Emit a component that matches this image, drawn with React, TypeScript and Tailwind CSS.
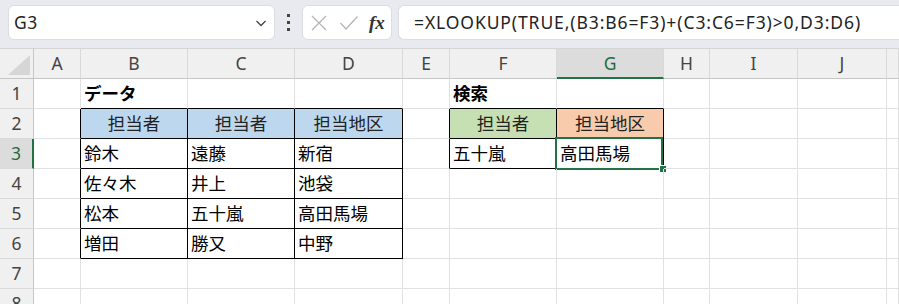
import React from 'react';

const COLS = ['A', 'B', 'C', 'D', 'E', 'F', 'G', 'H', 'I', 'J', 'K'];
const ROWS = [1, 2, 3, 4, 5, 6, 7, 8];

type Cell = { text?: string; bold?: boolean; center?: boolean; bg?: string };

const CELLS: Record<string, Cell> = {
  B1: { text: 'データ', bold: true },
  B2: { text: '担当者', center: true, bg: 'bg-[#bdd7ee]' },
  C2: { text: '担当者', center: true, bg: 'bg-[#bdd7ee]' },
  D2: { text: '担当地区', center: true, bg: 'bg-[#bdd7ee]' },
  B3: { text: '鈴木' }, C3: { text: '遠藤' }, D3: { text: '新宿' },
  B4: { text: '佐々木' }, C4: { text: '井上' }, D4: { text: '池袋' },
  B5: { text: '松本' }, C5: { text: '五十嵐' }, D5: { text: '高田馬場' },
  B6: { text: '増田' }, C6: { text: '勝又' }, D6: { text: '中野' },
  F1: { text: '検索', bold: true },
  F2: { text: '担当者', center: true, bg: 'bg-[#c6e0b4]' },
  G2: { text: '担当地区', center: true, bg: 'bg-[#f8cbad]' },
  F3: { text: '五十嵐' },
  G3: { text: '高田馬場' },
};

// cells framed by the black table borders
const inTable = (c: string, r: number) =>
  (['B', 'C', 'D'].includes(c) && r >= 2 && r <= 6) || (['F', 'G'].includes(c) && r >= 2 && r <= 3);

export default function App() {
  const borderClass = (c: string, r: number) => {
    const i = COLS.indexOf(c);
    const right = inTable(c, r) || (i + 1 < COLS.length && inTable(COLS[i + 1], r));
    const bottom = inTable(c, r) || inTable(c, r + 1);
    return `${right ? 'border-r-black' : 'border-r-[#e1e1e1]'} ${bottom ? 'border-b-black' : 'border-b-[#e1e1e1]'}`;
  };

  return (
    <div className="w-[899px] h-[304px] overflow-hidden bg-white text-black font-['Noto_Sans_CJK_JP','Noto_Sans',sans-serif]">
      {/* Formula bar */}
      <div className="h-[48px] bg-[#e8eaef] flex items-start pt-[5px] pl-[8px] overflow-hidden">
        <div className="w-[267px] h-[35px] shrink-0 bg-white rounded-[6px] border border-[#dcdde1] flex items-center justify-between pl-[5px] pr-[6px]">
          <span className="text-[17.5px] text-[#222] font-['Noto_Sans',sans-serif] tracking-[0.5px]">G3</span>
          <svg width="14" height="14" viewBox="0 0 14 14" className="text-[#444]">
            <path d="M2.5 5 L7 9.5 L11.5 5" fill="none" stroke="currentColor" strokeWidth="1.3" />
          </svg>
        </div>
        <div className="w-[27px] h-[35px] shrink-0 flex flex-col items-center justify-center gap-[4px]">
          <div className="w-[3px] h-[3px] bg-[#444]" />
          <div className="w-[3px] h-[3px] bg-[#444]" />
          <div className="w-[3px] h-[3px] bg-[#444]" />
        </div>
        <div className="w-[90px] h-[35px] shrink-0 bg-white rounded-[6px] border border-[#dcdde1] flex items-center pl-[7px] gap-[11px]">
          <svg width="18" height="18" viewBox="0 0 18 18">
            <path d="M2 2 L16 16 M16 2 L2 16" stroke="#b4b4b4" strokeWidth="1.2" fill="none" />
          </svg>
          <svg width="20" height="18" viewBox="0 0 20 18">
            <path d="M1.5 9 L7 15 L18.5 2.5" stroke="#b4b4b4" strokeWidth="1.2" fill="none" />
          </svg>
          <span className="text-[19px] italic font-bold leading-none text-[#333] font-['Liberation_Serif',serif] -ml-[1px]">fx</span>
        </div>
        <div className="ml-[6px] w-[520px] h-[35px] shrink-0 bg-white rounded-l-[6px] border border-r-0 border-[#dcdde1] flex items-center pl-[15px]">
          <span className="text-[17.5px] text-[#222] font-['Noto_Sans',sans-serif] tracking-[0.9px] whitespace-nowrap">
            =XLOOKUP(TRUE,(B3:B6=F3)+(C3:C6=F3)&gt;0,D3:D6)
          </span>
        </div>
      </div>

      {/* Sheet grid */}
      <div className="grid grid-cols-[34px_47px_107px_107px_108px_47px_107px_107px_46px_88px_89px_1fr] grid-rows-[31px_repeat(8,30px)]">
        {/* corner */}
        <div className="bg-[#f0f0f0] border-t border-t-[#d5d5d5] border-b border-b-[#c6c6c6] border-r border-r-[#c6c6c6] flex items-end justify-end pr-[3px] pb-[3px]">
          <svg width="22" height="20" viewBox="0 0 22 20">
            <path d="M22 0 L22 20 L0 20 Z" fill="#d6d6d6" />
          </svg>
        </div>
        {COLS.map(c => (
          <div
            key={c}
            className={`border-t border-t-[#d5d5d5] flex items-center justify-center text-[17.5px] font-['Noto_Sans',sans-serif] ${
              c === 'G'
                ? 'bg-[#dcdcdc] border-b-2 border-b-[#217346] border-r border-r-[#d9d9d9] text-[#1e6b3f]'
                : 'bg-[#f0f0f0] border-b border-b-[#c6c6c6] border-r border-r-[#d9d9d9] text-[#444]'
            }`}
          >
            {c === 'K' ? '' : c}
          </div>
        ))}

        {ROWS.map(r => (
          <React.Fragment key={r}>
            <div
              className={`flex items-center justify-center text-[17.5px] font-['Noto_Sans',sans-serif] border-b border-b-[#d9d9d9] ${
                r === 3
                  ? 'bg-[#dcdcdc] text-[#1e6b3f] border-r-2 border-r-[#217346]'
                  : 'bg-[#f0f0f0] text-[#444] border-r border-r-[#c6c6c6]'
              }`}
            >
              {r}
            </div>
            {COLS.map(c => {
              const key = `${c}${r}`;
              const cell = CELLS[key];
              return (
                <div
                  key={key}
                  className={`relative border-r border-b flex items-center px-[3px] text-[17.5px] whitespace-nowrap ${borderClass(c, r)} ${
                    cell?.bg ?? ''
                  } ${cell?.center ? 'justify-center text-[#222]' : ''} ${cell?.bold ? 'font-bold' : ''}`}
                >
                  {cell?.text}
                  {key === 'G3' && (
                    <>
                      <div className="absolute left-[-2px] top-[-2px] w-[108px] h-[33px] border-2 border-[#217346] pointer-events-none" />
                      <div className="absolute left-[103px] top-[27px] w-[6px] h-[6px] bg-[#217346] outline outline-1 outline-white" />
                    </>
                  )}
                </div>
              );
            })}
          </React.Fragment>
        ))}
      </div>
    </div>
  );
}
